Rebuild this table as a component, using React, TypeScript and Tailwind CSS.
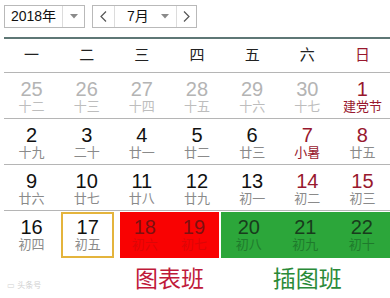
const font = { fontFamily: '"Liberation Sans", "Noto Sans CJK SC", sans-serif' };

type Day = { n: number; l: string; tone?: "gray" | "red" | "black"; lunarRed?: boolean };

const weekdays = ["一", "二", "三", "四", "五", "六", "日"];

const rows: Day[][] = [
  [
    { n: 25, l: "十二", tone: "gray" },
    { n: 26, l: "十三", tone: "gray" },
    { n: 27, l: "十四", tone: "gray" },
    { n: 28, l: "十五", tone: "gray" },
    { n: 29, l: "十六", tone: "gray" },
    { n: 30, l: "十七", tone: "gray" },
    { n: 1, l: "建党节", tone: "red", lunarRed: true },
  ],
  [
    { n: 2, l: "十九" },
    { n: 3, l: "二十" },
    { n: 4, l: "廿一" },
    { n: 5, l: "廿二" },
    { n: 6, l: "廿三" },
    { n: 7, l: "小暑", tone: "red", lunarRed: true },
    { n: 8, l: "廿五", tone: "red" },
  ],
  [
    { n: 9, l: "廿六" },
    { n: 10, l: "廿七" },
    { n: 11, l: "廿八" },
    { n: 12, l: "廿九" },
    { n: 13, l: "初一" },
    { n: 14, l: "初二", tone: "red" },
    { n: 15, l: "初三", tone: "red" },
  ],
];

const Caret = () => (
  <svg width="8" height="5" viewBox="0 0 8 5">
    <path d="M0 0 H8 L4 4.5 Z" fill="#8a8a8a" />
  </svg>
);

const Cell = ({ d }: { d: Day }) => {
  const num =
    d.tone === "gray" ? "text-[#b4b4b4]" : d.tone === "red" ? "text-[#98182e]" : "text-[#111]";
  const lun = d.tone === "gray" ? "text-[#bdbdbd]" : d.lunarRed ? "text-[#98182e]" : "text-[#8a8a8a]";
  return (
    <div className="flex flex-col items-center pt-[6px]">
      <span className={`text-[20px] leading-[20px] ${num}`}>{d.n}</span>
      <span className={`text-[13px] leading-[16px] ${lun}`}>{d.l}</span>
    </div>
  );
};

const App = () => {
  return (
    <div className="w-[390px] h-[298px] bg-white overflow-hidden" style={font}>
      {/* top bar */}
      <div className="flex items-start h-[39px] pt-[5px] border-b-2 border-[#5e7775] ml-[4px]">
        <div className="flex h-[23px] w-[81px] border border-[#b9b9b9] text-[14px] text-[#111]">
          <div className="flex w-[57px] items-center justify-center">2018年</div>
          <div className="flex flex-1 items-center justify-center border-l border-[#dcdcdc]">
            <Caret />
          </div>
        </div>
        <div className="ml-[7px] flex h-[23px] w-[105px] border border-[#b9b9b9] text-[14px] text-[#111]">
          <div className="flex w-[22px] items-center justify-center border-r border-[#dcdcdc]">
            <svg width="7" height="11" viewBox="0 0 7 11">
              <path d="M6 0.5 L1 5.5 L6 10.5" fill="none" stroke="#555" strokeWidth="1.2" />
            </svg>
          </div>
          <div className="flex w-[62px] items-center border-r border-[#dcdcdc]">
            <span className="ml-[12px]">7月</span>
            <span className="ml-auto mr-[7px] flex">
              <Caret />
            </span>
          </div>
          <div className="flex flex-1 items-center justify-center">
            <svg width="7" height="11" viewBox="0 0 7 11">
              <path d="M1 0.5 L6 5.5 L1 10.5" fill="none" stroke="#555" strokeWidth="1.2" />
            </svg>
          </div>
        </div>
      </div>

      <div className="ml-[4px] w-[386px]">
        {/* weekday header */}
        <div className="grid grid-cols-7 h-[34px] items-center border-b border-[#b5b5b5]">
          {weekdays.map((w, i) => (
            <div
              key={w}
              className={`text-center text-[15px] ${i === 6 ? "text-[#98182e]" : "text-[#222]"}`}
            >
              {w}
            </div>
          ))}
        </div>

        {rows.map((r, i) => (
          <div key={i} className="grid grid-cols-7 h-[46px] border-b border-[#b5b5b5]">
            {r.map((d) => (
              <Cell key={d.n} d={d} />
            ))}
          </div>
        ))}

        {/* last row with highlights */}
        <div className="grid grid-cols-7 h-[48px] pt-[1px]">
          <div className="flex flex-col items-center pt-[5px]">
            <span className="text-[20px] leading-[20px] text-[#111]">16</span>
            <span className="text-[13px] leading-[16px] text-[#8a8a8a]">初四</span>
          </div>
          <div className="ml-[2px] flex h-[46px] flex-col items-center border-2 border-[#e4b43c] pt-[3px]">
            <span className="text-[20px] leading-[20px] text-[#111]">17</span>
            <span className="text-[13px] leading-[16px] text-[#8a8a8a]">初五</span>
          </div>
          <div className="col-span-2 mx-[6px] grid h-[46px] grid-cols-2 bg-[#f90202]">
            {[
              [18, "初六"],
              [19, "初七"],
            ].map(([n, l]) => (
              <div key={n} className="flex flex-col items-center pt-[5px]">
                <span className="text-[20px] leading-[20px] text-[#7d1010]">{n}</span>
                <span className="text-[13px] leading-[16px] text-[#dc0606]">{l}</span>
              </div>
            ))}
          </div>
          <div className="col-span-3 ml-[-4px] grid h-[46px] grid-cols-3 bg-[#2ca63a]">
            {[
              [20, "初八"],
              [21, "初九"],
              [22, "初十"],
            ].map(([n, l]) => (
              <div key={n} className="flex flex-col items-center pt-[5px]">
                <span className="text-[20px] leading-[20px] text-[#183c1c]">{n}</span>
                <span className="text-[13px] leading-[16px] text-[#1f7a2c]">{l}</span>
              </div>
            ))}
          </div>
        </div>

        {/* labels */}
        <div className="grid grid-cols-7 h-[40px]">
          <div className="col-span-2 flex items-end pb-[7px]">
            <span className="text-[8px] text-[#d0d0d0] ml-[3px]">▭ 头条号</span>
          </div>
          <div className="col-span-2 flex items-center justify-center text-[23px] text-[#bf1a3a]">
            图表班
          </div>
          <div className="col-span-3 flex items-center justify-center text-[23px] text-[#2a8a38]">
            插图班
          </div>
        </div>
      </div>
    </div>
  );
};

export default App;
